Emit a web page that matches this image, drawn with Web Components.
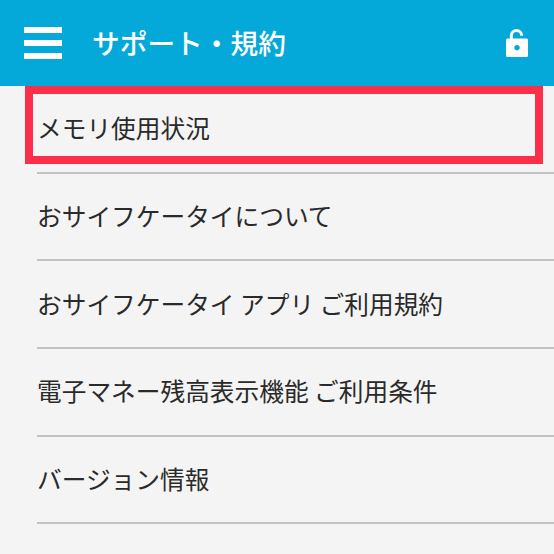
<!DOCTYPE html>
<html lang="ja"><head><meta charset="utf-8"><style>
html,body{margin:0;padding:0;background:#f4f4f4;height:100%;overflow:hidden}
</style></head><body>
<app-shell></app-shell>
<script>
const FONT='"Noto Sans CJK JP","Noto Sans",sans-serif';
class AppBar extends HTMLElement{constructor(){super();this.attachShadow({mode:'open'}).innerHTML=`<style>
:host{display:flex;align-items:center;height:86px;background:#04a8d9;color:#fff;font:500 27.700px/86px ${FONT};box-sizing:border-box;padding:0 26px 0 24px}
.m{width:38px;height:32px;display:flex;flex-direction:column;justify-content:space-between;margin-right:30px}
.m i{display:block;height:6px;background:#fff}
.t{flex:1;margin-top:-3px}
svg{display:block}
</style><div class="m"><i></i><i></i><i></i></div><div class="t"><slot></slot></div>
<svg width="22" height="28" viewBox="0 0 22 28"><path d="M5.300 11V6.700a5.200 5.200 0 0 1 10.400 0" fill="none" stroke="#fff" stroke-width="3"/><path fill="#fff" fill-rule="evenodd" d="M1.500 9.500h19a1.500 1.500 0 0 1 1.500 1.500v15.500a1.500 1.500 0 0 1-1.500 1.500h-19A1.500 1.500 0 0 1 0 26.500V11a1.500 1.500 0 0 1 1.500-1.500zM11 16a2.700 2.700 0 1 0 .01 0z"/></svg>`}}
customElements.define('app-bar',AppBar);
class MenuItem extends HTMLElement{constructor(){super();this.attachShadow({mode:'open'}).innerHTML=`<style>
:host{display:flex;align-items:center;height:87.700px;margin-left:37px;box-sizing:border-box;border-bottom:2px solid #c2c2c2;font:400 24.700px ${FONT};color:#2a2a2a;white-space:nowrap}
span{display:block;margin-top:-3px}
</style><span><slot></slot></span>`}}
customElements.define('menu-item',MenuItem);
class Highlight extends HTMLElement{constructor(){super();this.attachShadow({mode:'open'}).innerHTML=`<style>
:host{position:absolute;left:25px;top:86px;width:518px;height:78px;box-sizing:border-box;border:8px solid #fb2f49}
</style>`}}
customElements.define('high-light',Highlight);
class AppShell extends HTMLElement{constructor(){super();this.attachShadow({mode:'open'}).innerHTML=`<style>
:host{display:block;position:relative;width:554px;height:554px;overflow:hidden;background:#f4f4f4}
</style><app-bar>サポート・規約</app-bar>
<menu-item>メモリ使用状況</menu-item>
<menu-item>おサイフケータイについて</menu-item>
<menu-item>おサイフケータイ アプリ ご利用規約</menu-item>
<menu-item>電子マネー残高表示機能 ご利用条件</menu-item>
<menu-item>バージョン情報</menu-item>
<high-light></high-light>`}}
customElements.define('app-shell',AppShell);
</script></body></html>
